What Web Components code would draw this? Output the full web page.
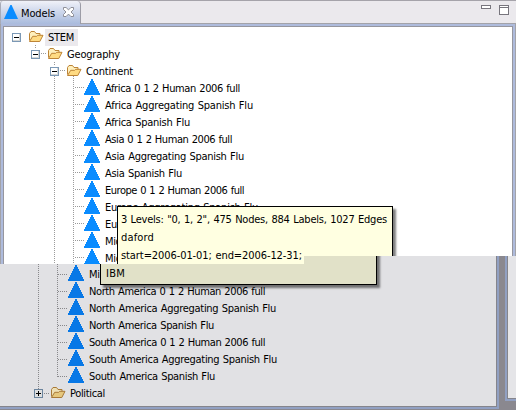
<!DOCTYPE html>
<html lang="en"><head><meta charset="utf-8"><title>Models</title>
<style>body{margin:0;overflow:hidden;background:#fff}</style></head>
<body><models-screen></models-screen>
<script>
// Text label whose tracking is adjusted to a nominal ink width.
customElements.define('ui-label', class extends HTMLElement{
  connectedCallback(){
    if(this.shadowRoot) return;
    this.attachShadow({mode:'open'}).innerHTML=`<style>:host{display:inline-block;white-space:pre;font:11px/17px "DejaVu Sans Condensed","DejaVu Sans",sans-serif;font-stretch:condensed;word-spacing:.6px;color:#000}span{display:inline-block}</style><span></span>`;
    const s=this.shadowRoot.querySelector('span'); s.textContent=this.getAttribute('text');
    const w=+this.getAttribute('w');
    if(w) s.style.letterSpacing=((w-s.getBoundingClientRect().width)/s.textContent.length)+'px';
  }
});
customElements.define('ui-icon', class extends HTMLElement{
  connectedCallback(){
    if(this.shadowRoot) return;
    const k=this.getAttribute('kind');
    const art={
      tri:`<svg width="16" height="17" style="margin-top:-4px" shape-rendering="crispEdges"><path fill="var(--tri,#0a8cff)" d="M7 1h2v2h1v2h1v2h1v2h1v2h1v2h1v2h1v2H0v-2h1v-2h1v-2h1V9h1V7h1V5h1V3h1z"/></svg>`,
      tab:`<svg width="14" height="14"><path fill="#0a8cff" d="M6.4 0h1.2L14 14H0z"/></svg>`,
      folder:`<svg width="16" height="17" style="margin-top:-2px"><path d="M1.5 12.5v-7l1.5-2h3.5l1.5 2h4v2" fill="var(--f1,#fff0bd)" stroke="var(--fs,#bd8436)"/><path d="M1.5 13.5l3.2-5.2h4l1-1h5.3l-3.2 6.2z" fill="var(--f2,#ffdb83)" stroke="var(--fs,#bd8436)" stroke-linejoin="round"/></svg>`,
      minus:`<svg width="9" height="9" shape-rendering="crispEdges"><rect x=".5" y=".5" width="8" height="8" fill="#fff" stroke="#7b98b5"/><path d="M1 7h7v1H1zM7 1h1v7H7z" fill="#d5d7d6"/><path d="M2 4h5v1H2z"/></svg>`,
      plus:`<svg width="9" height="9" shape-rendering="crispEdges"><rect x=".5" y=".5" width="8" height="8" fill="#dedfe0" stroke="#6b849d"/><path d="M2 4h5v1H2zM4 2h1v5H4z"/></svg>`,
      close:`<svg width="11" height="10"><path d="M.5.5h2.6l2.4 2.4L7.9.5h2.6v2L8 5l2.5 2.5v2H7.9L5.5 7.1 3.1 9.5H.5v-2L3 5 .5 2.5z" fill="#fff" stroke="#85858c" stroke-width=".9"/></svg>`,
      min:`<svg width="10" height="4" shape-rendering="crispEdges"><rect x=".5" y=".5" width="9" height="3" fill="#fff" stroke="#77757d"/></svg>`,
      max:`<svg width="10" height="10" shape-rendering="crispEdges"><rect x=".5" y=".5" width="9" height="9" fill="#fff" stroke="#77757d"/><path d="M0 2h10v1H0z" fill="#77757d"/></svg>`
    };
    this.attachShadow({mode:'open'}).innerHTML=`<style>:host{display:flex;flex:none}svg{display:block}</style>${art[k]}`;
  }
});
// One tree row: indent, optional expander, icon and label.
customElements.define('tree-row', class extends HTMLElement{
  connectedCallback(){
    if(this.shadowRoot) return;
    const a=n=>this.getAttribute(n), leaf=a('kind')==='leaf';
    this.attachShadow({mode:'open'}).innerHTML=`<style>
    :host{display:flex;height:17px;align-items:center;padding-left:${a('x')}px;box-sizing:border-box}
    .f{margin-left:7px}.l{padding-left:${leaf?5:4}px;height:17px}.sel{padding:0 4px 0 3px;margin-left:1px;background:#ebe9ed}</style>
    ${leaf?'<ui-icon kind="tri"></ui-icon>':`<ui-icon kind="${a('kind')}"></ui-icon><ui-icon class="f" kind="folder"></ui-icon>`}
    <ui-label class="l ${a('sel')!==null?'sel':''}" text="${a('text')}" w="${a('w')}"></ui-label>`;
  }
});
const rows=(x,list)=>list.map(([t,w])=>`<tree-row kind="leaf" x="${x}" text="${t}" w="${w}"></tree-row>`).join('');
customElements.define('view-header', class extends HTMLElement{
  connectedCallback(){
    this.attachShadow({mode:'open'}).innerHTML=`<style>
    :host{display:flex;height:24px;box-sizing:border-box;border-top:1px solid #a5a3aa;background:#ebe9ed;justify-content:space-between;border-bottom:1px solid #a3a3a9}
    .tab{display:flex;align-items:flex-start;box-sizing:border-box;width:81px;height:23px;padding:4px 0 0 3px;border-right:1px solid #9c9ca6;border-left:1px solid #a8abb8;background:linear-gradient(#f0f1f8,#cbd5ea 50%,#a9bbdd);border-radius:3px 4px 0 0}
    ui-label{margin:0 0 0 3px}.x{margin:2px 0 0 8px}
    .b{display:flex;align-items:flex-start;gap:8px;padding:4px 7px 0 0}</style>
    <div class="tab"><ui-icon kind="tab"></ui-icon><ui-label text="Models" w="34"></ui-label><ui-icon class="x" kind="close"></ui-icon></div>
    <div class="b"><ui-icon kind="min"></ui-icon><ui-icon kind="max"></ui-icon></div>`;
  }
});
customElements.define('models-view', class extends HTMLElement{
  connectedCallback(){
    this.attachShadow({mode:'open'}).innerHTML=`<style>
    :host{display:block;width:516px;height:264px;overflow:hidden;background:#fff}
    .frame{border:solid #aebbdc;border-width:2px 2px 0;margin:0 1px;height:260px;box-shadow:-1px 0 #a3a3a9,1px 0 #a3a3a9}
    .tree{border:1px solid #96969e;border-bottom:0;background:#fff;height:260px;padding-top:2px;box-sizing:border-box}
    .g{position:absolute;left:0;top:0;pointer-events:none}</style>
    <view-header></view-header><div class="frame"><div class="tree">
    <tree-row kind="minus" x="8" text="STEM" w="26" sel></tree-row>
    <tree-row kind="minus" x="27" text="Geography" w="53"></tree-row>
    <tree-row kind="minus" x="46" text="Continent" w="47"></tree-row>
    ${rows(80,[['Africa 0 1 2 Human 2006 full',135],['Africa Aggregating Spanish Flu',148],['Africa Spanish Flu',85],['Asia 0 1 2 Human 2006 full',127],['Asia Aggregating Spanish Flu',139],['Asia Spanish Flu',77],['Europe 0 1 2 Human 2006 full',139],['Europe Aggregating Spanish Flu',153],['Europe Spanish Flu',90],['Middle East 0 1 2 Human 2006 full',163],['Middle East Aggregating Spanish Flu',176]])}
    </div></div>
    <svg class="g" width="110" height="264" fill="none" stroke="#9b9b9b" stroke-dasharray="1 1" shape-rendering="crispEdges"><path d="M35.5 45V49M54.5 62V66M54.5 76V264M73.5 76V264M41 53.5h5M60 70.5h5"/>${[...Array(11)].map((_,i)=>`<path d="M75 ${87.5+17*i}h10"/>`).join('')}</svg>`;
  }
});
customElements.define('lower-view', class extends HTMLElement{
  connectedCallback(){
    this.attachShadow({mode:'open'}).innerHTML=`<style>
    :host{display:grid;grid-template-columns:499px 6px 11px;width:516px;height:154px;background:#8a888f;overflow:hidden;--tri:#0878e6;--f1:#eee0b5;--f2:#e5c77d;--fs:#a87937}
    .main{height:153px;background:#e1e1e4;border:solid #91a0c2;border-width:0 2px 2px 0;box-sizing:border-box}
    .in{height:151px;box-sizing:border-box;border:solid #85858c;border-width:0 1px 1px 0;padding-top:10px}
    .side{height:145px;box-sizing:border-box;background:#e5e5e8;border:solid #91a0c2;border-width:0 0 2px 2px}
    .side div{height:143px;box-sizing:border-box;border:solid #85858c;border-width:0 0 1px 1px}
    .g{position:absolute;left:0;top:8px}</style>
    <div class="main"><div class="in">${rows(68,[['Middle East Spanish Flu',113],['North America 0 1 2 Human 2006 full',176],['North America Aggregating Spanish Flu',187],['North America Spanish Flu',125],['South America 0 1 2 Human 2006 full',176],['South America Aggregating Spanish Flu',188],['South America Spanish Flu',126]])}<tree-row kind="plus" x="34" text="Political" w="35"></tree-row></div></div><div></div><div class="side"><div></div></div>
    <svg class="g" width="80" height="130" fill="none" stroke="#88888b" stroke-dasharray="1 1" shape-rendering="crispEdges"><path d="M38.5 0V125M57.5 0V113M44 129.5h6"/>${[...Array(7)].map((_,i)=>`<path d="M58 ${10.5+17*i}h10"/>`).join('')}</svg>`;
  }
});
customElements.define('tool-tip', class extends HTMLElement{
  connectedCallback(){
    this.attachShadow({mode:'open'}).innerHTML=`<style>:host{display:flex;flex-direction:column;box-sizing:border-box;border:1px solid #000;background:var(--tip,#ffffe1);box-shadow:3px 3px 2px rgba(0,0,0,.5)}</style><slot></slot>`;
  }
});
customElements.define('models-screen', class extends HTMLElement{
  connectedCallback(){
    this.attachShadow({mode:'open'}).innerHTML=`<style>
    :host{display:block;position:relative;width:516px;height:410px;overflow:hidden}
    .low{position:absolute;left:0;top:256px;width:516px;height:154px;overflow:hidden}
    .up{position:absolute;left:0;top:0;width:516px;height:264px;overflow:hidden;clip-path:polygon(0 0,516px 0,516px 256px,304px 256px,304px 264px,0 264px)}
    .t1{position:absolute;left:117px;top:206px;width:276px;height:76px;padding:4px 0 0 3px;gap:1px}
    .t2{position:absolute;left:100px;top:-30px;width:277px;height:59px;padding:38px 0 0 5px;--tip:#e1e1c8}</style>
    <div class="low"><lower-view></lower-view><tool-tip class="t2"><ui-label text="IBM" w="19"></ui-label></tool-tip></div>
    <div class="up"><models-view></models-view><tool-tip class="t1"><ui-label text='3 Levels: &quot;0, 1, 2&quot;, 475 Nodes, 884 Labels, 1027 Edges' w="266"></ui-label><ui-label text="daford" w="33"></ui-label><ui-label text="start=2006-01-01; end=2006-12-31;" w="181"></ui-label></tool-tip></div>`;
  }
});
</script></body></html>
